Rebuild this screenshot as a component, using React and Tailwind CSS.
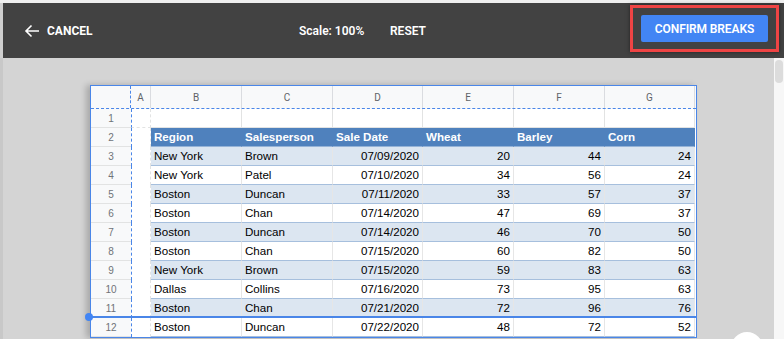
import React from "react";

const rows = [
  ["New York", "Brown", "07/09/2020", 20, 44, 24],
  ["New York", "Patel", "07/10/2020", 34, 56, 24],
  ["Boston", "Duncan", "07/11/2020", 33, 57, 37],
  ["Boston", "Chan", "07/14/2020", 47, 69, 37],
  ["Boston", "Duncan", "07/14/2020", 46, 70, 50],
  ["Boston", "Chan", "07/15/2020", 60, 82, 50],
  ["New York", "Brown", "07/15/2020", 59, 83, 63],
  ["Dallas", "Collins", "07/16/2020", 73, 95, 63],
  ["Boston", "Chan", "07/21/2020", 72, 96, 76],
  ["Boston", "Duncan", "07/22/2020", 48, 72, 52],
];

const cols = "grid grid-cols-[40px_20px_91px_91px_90px_91px_91px_90px]";
const letters = ["A", "B", "C", "D", "E", "F", "G"];

const RowNum = ({ n }) => (
  <div className="h-[19px] flex items-center justify-center bg-[#f8f9fa] border-b border-[#e2e3e3] text-[10px] text-[#6f7378]">
    {n}
  </div>
);

const Cell = ({ children, right, bg, bold }) => (
  <div
    className={`h-[19px] flex items-center px-[3px] border-r border-b truncate ${
      right ? "justify-end" : ""
    } ${bold ? "font-bold text-white" : "text-black"} ${bg}`}
  >
    {children}
  </div>
);

export default function App() {
  return (
    <div className="w-[784px] h-[339px] overflow-hidden relative bg-[#d4d4d4] font-['Roboto',sans-serif]">
      <div className="h-[3px] bg-[#efefef]" />
      {/* toolbar */}
      <div className="h-[55px] bg-[#424242] flex items-center text-white text-[12px] font-bold border-l-[3px] border-[#cfcfcf]">
        <div className="flex items-center pl-[21px] w-[296px]">
          <svg width="16" height="14" viewBox="0 0 16 14" className="mr-[7px]">
            <path d="M15 7H2M7.5 1.5L2 7l5.5 5.5" stroke="white" strokeWidth="1.6" fill="none" />
          </svg>
          CANCEL
        </div>
        <div className="w-[91px] font-semibold">Scale: 100%</div>
        <div className="font-semibold">RESET</div>
        <div className="ml-[204px] mt-[-4px] border-[3px] border-[#ef4444] w-[149px] h-[47px] flex items-center justify-center shadow-[0_0_4px_rgba(0,0,0,0.5)]">
          <div className="w-[127px] h-[27px] bg-[#4285f4] rounded-[2px] flex items-center justify-center text-[12px] font-semibold tracking-[-0.1px]">
            CONFIRM BREAKS
          </div>
        </div>
      </div>

      {/* body */}
      <div className="flex">
        <div className="w-[774px] h-[281px] pl-[90px] pt-[27px] border-l-[3px] border-[#c8c8c8]">
          <div className="relative w-[607px] bg-white border-[1.5px] border-[#4a86e8] shadow-[-4px_0_6px_rgba(0,0,0,0.2)] text-[11.6px] font-['Liberation_Sans',Arial,sans-serif] ml-[-3px]">
            <div className={`${cols} h-[23px] bg-[#f8f9fa] border-b border-dashed border-[#4a86e8]`}>
              <div className="border-r border-dashed border-[#4a86e8]" />
              {letters.map((l) => (
                <div key={l} className="flex items-center justify-center text-[10px] text-[#5f6368] border-r border-[#dadce0] font-['Roboto',sans-serif]">
                  {l}
                </div>
              ))}
            </div>
            <div className="relative">
              <div className={cols}>
                <RowNum n={1} />
                <div className="h-[19px] border-l border-dashed border-[#4a86e8] border-r border-b border-r-[#e2e3e3] border-b-[#e2e3e3]" />
                {[0, 1, 2, 3, 4, 5].map((i) => (
                  <div key={i} className="h-[19px] border-r border-b border-[#e2e3e3]" />
                ))}
              </div>
              <div className={cols}>
                <RowNum n={2} />
                <div className="h-[19px] border-l border-dashed border-[#4a86e8] border-r border-r-[#e2e3e3]" />
                {["Region", "Salesperson", "Sale Date", "Wheat", "Barley", "Corn"].map((h) => (
                  <Cell key={h} bold bg="bg-[#4f81bd] border-[#4f81bd] border-b-[#95b3d7]">
                    {h}
                  </Cell>
                ))}
              </div>
              {rows.map((r, i) => {
                const bg =
                  i % 2 === 0
                    ? "bg-[#dce6f1] border-r-[#e6e6e6] border-b-[#a6bfdd]"
                    : "bg-white border-r-[#e6e6e6] border-b-[#a6bfdd]";
                return (
                  <div key={i} className={cols}>
                    <RowNum n={i + 3} />
                    <div className="h-[19px] border-l border-dashed border-[#4a86e8] border-r border-r-[#e2e3e3]" />
                    <Cell bg={bg}>{r[0]}</Cell>
                    <Cell bg={bg}>{r[1]}</Cell>
                    <Cell bg={bg} right>{r[2]}</Cell>
                    <Cell bg={bg} right>{r[3]}</Cell>
                    <Cell bg={bg} right>{r[4]}</Cell>
                    <Cell bg={bg} right>{r[5]}</Cell>
                  </div>
                );
              })}
              {/* page break line */}
              <div className="absolute left-[-4px] right-0 top-[207px] h-[1.5px] bg-[#4a86e8]" />
              <div className="absolute left-[-6px] top-[204px] w-[8px] h-[8px] rounded-full bg-[#4285f4]" />
            </div>
            <div className="absolute right-[-1px] top-0 bottom-0 border-r-[1.5px] border-dashed border-[#4a86e8]" />
          </div>
        </div>
        <div className="w-[10px] h-[281px] bg-[#f7f7f7] relative">
          <div className="absolute left-[1px] top-[2px] w-[8px] h-[23px] rounded-full bg-[#dcdcdc]" />
        </div>
      </div>
      <div className="absolute left-[731px] top-[332px] w-[32px] h-[32px] rounded-full bg-white" />
    </div>
  );
}
